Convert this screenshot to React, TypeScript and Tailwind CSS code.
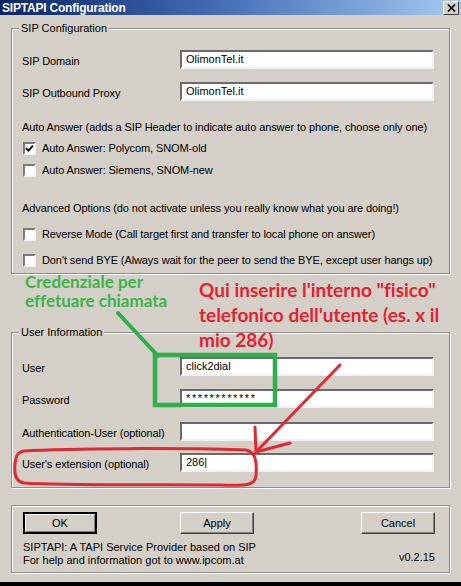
import React from "react";

const ui = { fontFamily: '"Liberation Sans", Arial, sans-serif' };
const hand = { fontFamily: 'Lato, "Open Sans", sans-serif' };

function TextBox({ value, secret }: { value?: string; secret?: boolean }) {
    return (
        <div
            className={
                "flex h-[19px] w-[254px] items-center border-2 border-t-[#6a6a6a] border-l-[#6a6a6a] border-b-[#f2f2f2] border-r-[#f2f2f2] bg-white pl-[4px] text-[11px] text-black " +
                (secret ? "tracking-[1.6px]" : "")
            }
        >
            {value}
        </div>
    );
}

function Row({ label, value, secret, className }: { label: string; value?: string; secret?: boolean; className: string }) {
    return (
        <div className={"flex h-[19px] items-center " + className}>
            <span className="mt-[3px] w-[168px] pl-[10px] text-[11px] tracking-[-0.1px] text-black">{label}</span>
            <TextBox value={value} secret={secret} />
        </div>
    );
}

function Check({ label, checked, className }: { label: string; checked?: boolean; className: string }) {
    return (
        <div className={"flex h-[20px] items-center pl-[11px] " + className}>
            <span className="mr-[6px] flex h-[13px] w-[13px] items-center justify-center border-2 border-t-[#7a7a7a] border-l-[#7a7a7a] border-b-[#f4f4f4] border-r-[#f4f4f4] bg-white">
                {checked && (
                    <svg width="9" height="9" viewBox="0 0 9 9">
                        <path d="M1 4.2 L3.4 6.6 L8 1.6" fill="none" stroke="#000" strokeWidth="1.8" />
                    </svg>
                )}
            </span>
            <span className="text-[11px] tracking-[-0.1px] text-black">{label}</span>
        </div>
    );
}

function Button({ label, def }: { label: string; def?: boolean }) {
    return (
        <div
            className={
                "flex h-[22px] w-[74px] items-center justify-center bg-[#d4d0c8] text-[11px] text-black " +
                (def
                    ? "border-2 border-black shadow-[inset_1px_1px_0_#fff,inset_-1px_-1px_0_#808080]"
                    : "border border-t-white border-l-white border-b-[#404040] border-r-[#404040] shadow-[inset_-1px_-1px_0_#808080]")
            }
        >
            {label}
        </div>
    );
}

const group =
    "mx-[11px] border border-[#8c8c8c] shadow-[inset_1px_1px_0_#ffffff,1px_1px_0_#ffffff]";

export default function App() {
    return (
        <div className="relative flex h-[586px] w-[461px] flex-col overflow-hidden bg-[#d4d0c8]" style={ui}>
            {/* title bar */}
            <div className="flex h-[15px] items-center justify-between bg-gradient-to-r from-[#0a246a] via-[#4a72b8] to-[#a6caf0] pl-[2px] pr-[2px]">
                <span className="text-[12px] font-bold leading-none tracking-[-0.2px] text-white">SIPTAPI Configuration</span>
                <span className="flex h-[14px] w-[16px] items-center justify-center border border-t-white border-l-white border-b-[#404040] border-r-[#404040] bg-[#d4d0c8]">
                    <svg width="9" height="8" viewBox="0 0 9 8">
                        <path d="M1 0.5 L8 7.5 M8 0.5 L1 7.5" stroke="#000" strokeWidth="1.7" />
                    </svg>
                </span>
            </div>

            {/* SIP configuration */}
            <fieldset className={group + " mt-[5px] pb-[3px]"}>
                <legend className="ml-[7px] bg-[#d4d0c8] px-[2px] text-[11px] leading-[16px] text-black">
                    SIP Configuration
                </legend>
                <Row label="SIP Domain" value="OlimonTel.it" className="mt-[14px]" />
                <Row label="SIP Outbound Proxy" value="OlimonTel.it" className="mt-[13px]" />
                <div className="mt-[16px] flex h-[20px] items-center pl-[10px] text-[11px] tracking-[-0.1px] text-black">
                    Auto Answer (adds a SIP Header to indicate auto answer to phone, choose only one)
                </div>
                <Check label="Auto Answer: Polycom, SNOM-old" checked className="mt-[1px]" />
                <Check label="Auto Answer: Siemens, SNOM-new" className="mt-[2px]" />
                <div className="mt-[18px] flex h-[20px] items-center pl-[10px] text-[11px] tracking-[-0.1px] text-black">
                    Advanced Options (do not activate unless you really know what you are doing!)
                </div>
                <Check label="Reverse Mode (Call target first and transfer to local phone on answer)" className="mt-[6px]" />
                <Check label="Don't send BYE (Always wait for the peer to send the BYE, except user hangs up)" className="mt-[6px]" />
            </fieldset>

            {/* user information */}
            <fieldset className={group + " mt-[50px] pb-[15px]"}>
                <legend className="ml-[7px] bg-[#d4d0c8] px-[2px] text-[11px] leading-[16px] text-black">
                    User Information
                </legend>
                <Row label="User" value="click2dial" className="mt-[17px]" />
                <Row label="Password" value="************" secret className="mt-[13px]" />
                <Row label="Authentication-User (optional)" className="mt-[14px]" />
                <Row label="User's extension (optional)" value="286|" className="mt-[12px]" />
            </fieldset>

            {/* buttons + info */}
            <div className={group + " mt-[17px] px-[11px] pt-[6px] pb-[5px]"}>
                <div className="flex items-center">
                    <Button label="OK" def />
                    <div className="ml-[83px]">
                        <Button label="Apply" />
                    </div>
                    <div className="ml-auto mr-[3px]">
                        <Button label="Cancel" />
                    </div>
                </div>
                <div className="mt-[7px] flex items-end justify-between text-[11px] leading-[13px] text-black">
                    <div>
                        <div>SIPTAPI: A TAPI Service Provider based on SIP</div>
                        <div>For help and information got to www.ipcom.at</div>
                    </div>
                    <div className="mb-[3px] mr-[3px]">v0.2.15</div>
                </div>
            </div>

            <div className="mt-auto h-[4px] bg-black" />

            {/* annotations drawn over the dialog */}
            <div
                className="absolute left-[25px] top-[272px] text-[17px] font-bold leading-[19px] text-[#3bb54a] [font-variant-ligatures:none]"
                style={hand}
            >
                Credenziale per
                <br />
                effetuare chiamata
            </div>
            <div
                className="absolute left-[199px] top-[277px] w-[262px] text-[19px] font-bold leading-[25px] text-[#e42131] [font-variant-ligatures:none]"
                style={hand}
            >
                Qui inserire l'interno "fisico" telefonico dell'utente (es. x il mio 286)
            </div>
            <svg className="pointer-events-none absolute left-0 top-0" width="461" height="586" viewBox="0 0 461 586">
                <path d="M118 313 L158 356" stroke="#2fae4c" strokeWidth="4" strokeLinecap="round" />
                <rect x="155" y="355" width="120" height="50" fill="none" stroke="#2fae4c" strokeWidth="4.5" />
                <path d="M340 365 L256 452" stroke="#df2a35" strokeWidth="3" strokeLinecap="round" />
                <path d="M255 427 L256 452 L290 443" fill="none" stroke="#df2a35" strokeWidth="3" strokeLinecap="round" />
                <path
                    d="M24 451 C70 448 180 448 246 450 C256 452 257 462 256 476 C255 485 248 486 220 485 C160 484 70 486 24 483 C16 482 14 474 15 464 C16 455 18 452 24 451 Z"
                    fill="none"
                    stroke="#df2a35"
                    strokeWidth="3"
                />
            </svg>
        </div>
    );
}
